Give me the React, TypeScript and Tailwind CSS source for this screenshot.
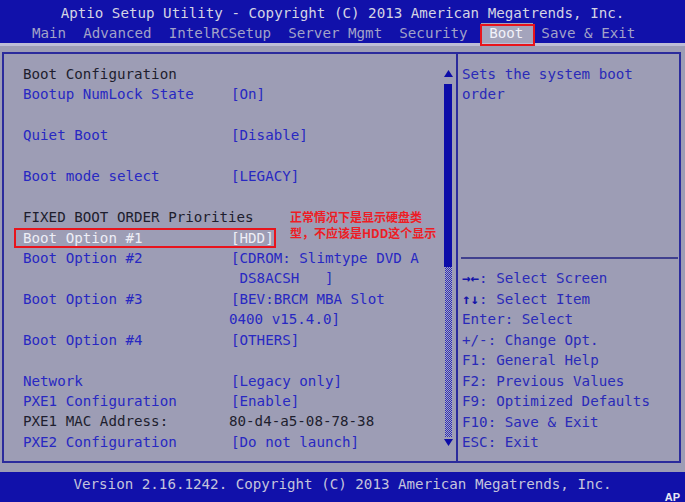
import React from "react";

type Row = {
  label?: string;
  value?: string;
  tone?: "blue" | "dark" | "sel";
  shift?: boolean;
};

const rows: Row[] = [
  { label: "Boot Configuration", tone: "dark" },
  { label: "Bootup NumLock State", value: "[On]" },
  {},
  { label: "Quiet Boot", value: "[Disable]" },
  {},
  { label: "Boot mode select", value: "[LEGACY]" },
  {},
  { label: "FIXED BOOT ORDER Priorities", tone: "dark" },
  { label: "Boot Option #1", value: "[HDD]", tone: "sel" },
  { label: "Boot Option #2", value: "[CDROM: Slimtype DVD A" },
  { value: " DS8ACSH   ]" },
  { label: "Boot Option #3", value: "[BEV:BRCM MBA Slot" },
  { value: "0400 v15.4.0]", shift: true },
  { label: "Boot Option #4", value: "[OTHERS]" },
  {},
  { label: "Network", value: "[Legacy only]" },
  { label: "PXE1 Configuration", value: "[Enable]" },
  { label: "PXE1 MAC Address:", value: "80-d4-a5-08-78-38", tone: "dark", shift: true },
  { label: "PXE2 Configuration", value: "[Do not launch]" },
];

const keys = [
  ["→←", ": Select Screen"],
  ["↑↓", ": Select Item"],
  ["Enter", ": Select"],
  ["+/-", ": Change Opt."],
  ["F1", ": General Help"],
  ["F2", ": Previous Values"],
  ["F9", ": Optimized Defaults"],
  ["F10", ": Save & Exit"],
  ["ESC", ": Exit"],
];

const toneClass = {
  blue: "text-[#2828c2]",
  dark: "text-[#1e1e2e]",
  sel: "text-[#eeeef6]",
};

function SetupRow({ row }: { row: Row }) {
  const tone = toneClass[row.tone ?? "blue"];
  if (row.label && !row.value) {
    return <div className={`h-[20.45px] whitespace-pre ${tone}`}>{row.label}</div>;
  }
  return (
    <div className={`relative grid h-[20.45px] grid-cols-[208px_1fr] whitespace-pre ${tone}`}>
      <span>{row.label ?? ""}</span>
      <span className={row.shift ? "-ml-[2px]" : ""}>{row.value ?? ""}</span>
      {row.tone === "sel" && (
        <div className="absolute left-[-9px] top-0 h-full w-[262px] border-2 border-[#e8141c]" />
      )}
    </div>
  );
}

function Arrow({ down }: { down?: boolean }) {
  return (
    <svg width="9" height="7" viewBox="0 0 9 7" className="block">
      <polygon points={down ? "0,0 9,0 4.5,7" : "4.5,0 9,7 0,7"} fill="#0c0ca8" />
    </svg>
  );
}

export default function App() {
  return (
    <div className="h-[502px] w-[685px] overflow-hidden bg-[#9d9db5] font-['DejaVu_Sans_Mono','Liberation_Mono',monospace] text-[14.2px] leading-[20px]">
      {/* title + menu tabs */}
      <header className="h-[43px] bg-[#1111aa]">
        <div className="pt-[3px] text-center text-[#d4d4e4]">
          Aptio Setup Utility - Copyright (C) 2013 American Megatrends, Inc.
        </div>
        <div className="flex h-[20px] whitespace-pre pl-[32px] text-[#a2a2c8]">
          <span>Main  Advanced  IntelRCSetup  Server Mgmt  Security </span>
          <span className="relative ml-[5px] bg-[#a4a4bc] pl-[8px] pr-[10px] text-[#f2f2fa]">
            Boot
            <span className="absolute bottom-[-3px] left-[-1px] right-[-2px] top-[1px] z-10 border-2 border-[#e8141c]" />
          </span>
          <span className="ml-[8px]">Save &amp; Exit</span>
        </div>
      </header>

      <main className="h-[429px] border-t-[3px] border-[#bdbdd6] pt-[6px]">
        <div className="ml-[2px] flex h-[411px] w-[679px] border-2 border-[#2b2b9c]">
          {/* settings list */}
          <div className="relative w-[439px] pl-[19px] pt-[10px] leading-[20.45px]">
            {rows.map((r, i) => (
              <SetupRow key={i} row={r} />
            ))}
            <div className="absolute left-[286px] top-[155px] font-['Noto_Sans_CJK_SC',sans-serif] text-[12px] font-bold leading-[16px] text-[#ee1c24]">
              <div>正常情况下是显示硬盘类</div>
              <div>型，不应该是HDD这个显示</div>
            </div>
          </div>

          {/* scrollbar */}
          <div className="flex w-[10px] flex-col items-center pt-[16px]">
            <Arrow />
            <div className="mt-[7px] h-[183px] w-[8px] bg-[#0c0ca8]" />
            <div className="h-[170px] w-[7px] bg-[repeating-conic-gradient(#2c2cb4_0_25%,#a6a6c8_0_50%)] bg-[length:2px_2px]" />
            <div className="mt-[2px]">
              <Arrow down />
            </div>
          </div>

          {/* help panel */}
          <div className="ml-[3px] w-[223px] border-l-2 border-[#2b2b9c] pl-[4px] pt-[10px] leading-[20.45px] text-[#2a2ab8]">
            <div className="h-[20.45px]">Sets the system boot</div>
            <div className="h-[20.45px]">order</div>
            <div className="h-[143.15px]" />
            <div className="flex h-[20.45px] items-center">
              <div className="ml-[-1px] h-[2px] w-[217px] bg-[#40408e]" />
            </div>
            {keys.map(([k, t], i) => (
              <div key={k} className="h-[20.45px] whitespace-pre">
                <span className={i < 2 ? "font-bold text-[#1414a8]" : "text-[#2a2ab8]"}>{k}</span>
                <span>{t}</span>
              </div>
            ))}
          </div>
        </div>
      </main>

      <footer className="relative h-[30px] bg-[#1111aa] pt-[2px] text-center text-[#c4c4dc]">
        Version 2.16.1242. Copyright (C) 2013 American Megatrends, Inc.
        <span className="absolute bottom-[-5px] right-[5px] font-['Liberation_Sans',sans-serif] text-[11px] font-bold text-[#e8e8f4]">
          AP
        </span>
      </footer>
    </div>
  );
}
